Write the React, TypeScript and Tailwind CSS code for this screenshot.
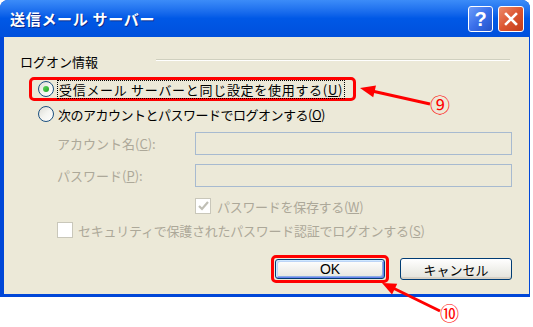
import React from "react";

// XP-style "送信メール サーバー" dialog with red callout annotations.

function Radio({ checked }: { checked?: boolean }) {
  return (
    <span className="flex h-[16px] w-[16px] shrink-0 items-center justify-center rounded-full border border-[#1C5180] bg-gradient-to-br from-[#DCDCD6] via-[#F4F4F0] to-[#FFFFFF]">
      {checked && (
        <span className="h-[6px] w-[6px] rounded-full bg-gradient-to-br from-[#5CD65C] to-[#21A121]" />
      )}
    </span>
  );
}

function Check({ checked }: { checked?: boolean }) {
  return (
    <span className="flex h-[16px] w-[16px] shrink-0 items-center justify-center border border-[#C9C7BA] bg-white">
      {checked && (
        <svg width="11" height="10" viewBox="0 0 11 10">
          <path d="M1 5 L4 8 L10 1" fill="none" stroke="#C0BFB5" strokeWidth="2.2" />
        </svg>
      )}
    </span>
  );
}

export default function App() {
  return (
    <div className="relative h-[327px] w-[533px] overflow-hidden bg-white font-['Noto_Sans_CJK_JP',sans-serif] text-[13px] leading-none text-black">
      <div className="flex h-[297px] w-[530px] flex-col overflow-hidden rounded-t-[8px] bg-[#0047D8]">
        {/* Title bar */}
        <div className="flex h-[37px] shrink-0 items-center bg-gradient-to-b from-[#3C8CF8] via-[#0058E6] to-[#0050DC] pl-[10px] pr-[6px]">
          <span className="text-[15px] font-bold tracking-[0.7px] text-white [text-shadow:1px_1px_0_#0A2A8A]">
            送信メール サーバー
          </span>
          <div className="ml-auto flex gap-[5px]">
            <div className="flex h-[26px] w-[25px] items-center justify-center rounded-[3px] border border-white bg-gradient-to-br from-[#6E9CF8] via-[#3A6FEA] to-[#2452C8]">
              <span className="font-['Liberation_Sans',sans-serif] text-[20px] font-bold text-white">?</span>
            </div>
            <div className="flex h-[26px] w-[26px] items-center justify-center rounded-[3px] border border-white bg-gradient-to-br from-[#EC8A6A] via-[#DC5530] to-[#C23C1A]">
              <svg width="14" height="14" viewBox="0 0 14 14">
                <path d="M2 2 L12 12 M12 2 L2 12" stroke="white" strokeWidth="2.6" strokeLinecap="square" />
              </svg>
            </div>
          </div>
        </div>

        {/* Client area */}
        <div className="flex flex-1 pb-[3px] pl-[4px] pr-[3px]">
          <div className="flex flex-1 flex-col bg-[#ECE9D8] pl-[16px] pr-[17px]">
            <div className="mt-[17px] flex h-[16px] items-start">
              <span className="leading-[16px]">ログオン情報</span>
              <div className="ml-[58px] mr-[2px] mt-[5px] flex-1 border-t border-b border-t-[#D0D0BF] border-b-white" />
            </div>

            <div className="ml-[9px] mt-[7px] flex h-[24px] w-[327px] items-center rounded-[5px] border-[3px] border-[#FF0000] pl-[6px]">
              <Radio checked />
              <span className="ml-[3px] border border-dotted border-black px-px py-[2px] tracking-[0.7px]">
                受信メール サーバーと同じ設定を使用する(<u>U</u>)
              </span>
            </div>

            <div className="ml-[18px] mt-[2px] flex h-[22px] items-center">
              <Radio />
              <span className="ml-[4px] tracking-[-0.5px]">
                次のアカウントとパスワードでログオンする(<u>O</u>)
              </span>
            </div>

            <div className="ml-[37px] mt-[7px] flex items-center">
              <span className="w-[138px] text-[#ACA899]">
                アカウント名(<u>C</u>):
              </span>
              <div className="h-[23px] w-[317px] border border-[#A7BAD0] bg-[#ECE9D8]" />
            </div>

            <div className="ml-[37px] mt-[9px] flex items-center">
              <span className="w-[138px] text-[#ACA899]">
                パスワード(<u>P</u>):
              </span>
              <div className="h-[23px] w-[317px] border border-[#A7BAD0] bg-[#ECE9D8]" />
            </div>

            <div className="ml-[175px] mt-[11px] flex items-center">
              <Check checked />
              <span className="ml-[6px] tracking-[-0.3px] text-[#ACA899]">
                パスワードを保存する(<u>W</u>)
              </span>
            </div>

            <div className="ml-[37px] mt-[8px] flex items-center">
              <Check />
              <span className="ml-[5px] tracking-[-0.25px] text-[#ACA899]">
                セキュリティで保護されたパスワード認証でログオンする(<u>S</u>)
              </span>
            </div>

            <div className="mt-[17px] flex items-center justify-end gap-[11px]">
              <div className="rounded-[5px] border-[3px] border-[#FF0000] p-px">
                <button className="flex h-[20px] w-[110px] items-center justify-center rounded-[3px] border border-[#003C74] bg-gradient-to-b from-white to-[#E6E5DE] font-['Liberation_Sans',sans-serif] text-[14px] shadow-[inset_1px_1px_0_#CEE7FF,inset_-1px_-1px_0_#6982EE,inset_2px_2px_0_#BCD4F6,inset_-2px_-2px_0_#89ADE4]">
                  OK
                </button>
              </div>
              <button className="flex h-[22px] w-[112px] items-center justify-center rounded-[3px] border border-[#003C74] bg-gradient-to-b from-white to-[#E3E2DA] text-[13px] shadow-[inset_0_-2px_0_#D6D0C5]">
                キャンセル
              </button>
            </div>
          </div>
        </div>
      </div>

      {/* Callout arrows */}
      <svg className="pointer-events-none absolute inset-0" width="533" height="327">
        <line x1="430" y1="104" x2="372" y2="91" stroke="#FF0000" strokeWidth="3" />
        <polygon points="360,88 376,85.6 373.2,97.2" fill="#FF0000" />
        <line x1="440" y1="311" x2="393" y2="288" stroke="#FF0000" strokeWidth="3" />
        <polygon points="382,283 397.2,283.7 392,294.5" fill="#FF0000" />
      </svg>
      <span className="absolute left-[430px] top-[95px] text-[20px] leading-[20px] text-[#FF0000]">⑨</span>
      <span className="absolute left-[440px] top-[303px] text-[19px] leading-[19px] text-[#FF0000]">⑩</span>
    </div>
  );
}
